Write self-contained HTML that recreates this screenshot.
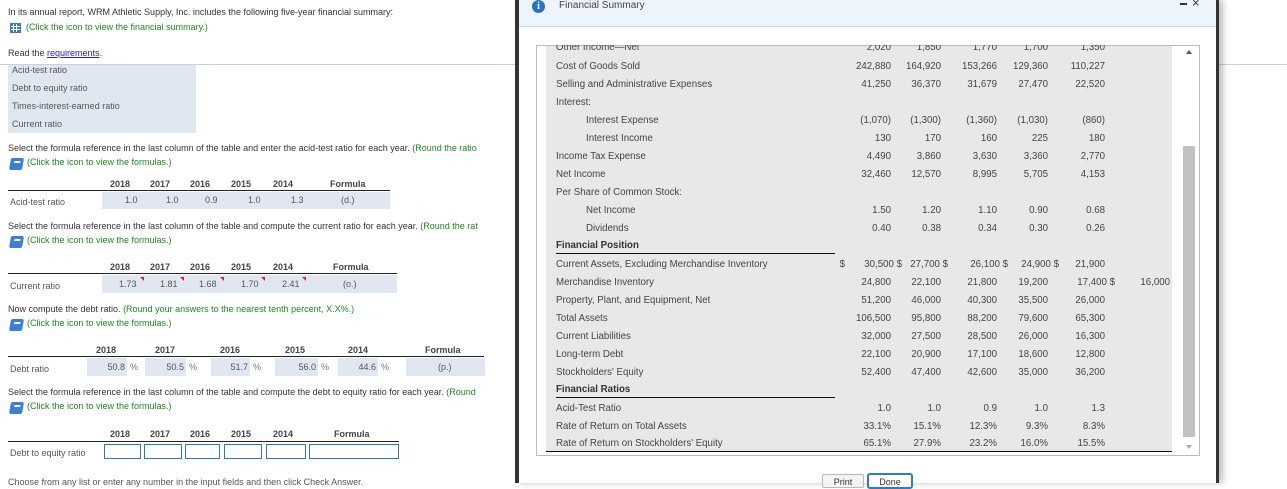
<!DOCTYPE html>
<html><head><meta charset="utf-8"><style>
*{margin:0;padding:0;box-sizing:border-box}
body{width:1287px;height:483px;overflow:hidden;background:#fff;font-family:"Liberation Sans",Arial,sans-serif;font-size:9px;color:#333;position:relative}
.a{position:absolute;white-space:nowrap}
.g{color:#1c8a1c}
.r{text-align:right}
.gray{background:#e1e7f1}
.hd{font-weight:bold;color:#444}
.m{font-size:9.7px;color:#444}
.in{position:absolute;border:1.5px solid #2a7fa3;background:#fff;height:15px;top:444px}
.book{position:absolute;width:13px;height:12px;background:#3b7fd6;border-radius:2px;transform:skewX(-10deg)}
.book:after{content:"";position:absolute;left:4px;top:3px;width:6px;height:1.5px;background:#fff}
.tri{position:absolute;width:0;height:0;border-left:4px solid transparent;border-top:4px solid #d22;top:277px}
</style></head><body>
<div class="a" style="left:0;top:64px;width:1287px;height:1px;background:#c8d0dc"></div>

<div class="a" style="left:8px;top:7px">In its annual report, WRM Athletic Supply, Inc. includes the following five-year financial summary:</div>
<div class="a" style="left:10px;top:23px;width:11px;height:10px;background:#3a78c8;border:1px solid #3a78c8;background-image:linear-gradient(90deg,transparent 2px,#fff 2px,#fff 3px,transparent 3px,transparent 5px,#fff 5px,#fff 6px,transparent 6px),linear-gradient(0deg,transparent 2px,#fff 2px,#fff 3px,transparent 3px,transparent 5px,#fff 5px,#fff 6px,transparent 6px)"></div>
<div class="a g" style="left:26px;top:22px">(Click the icon to view the financial summary.)</div>
<div class="a" style="left:8px;top:48px">Read the <span style="color:#22c;text-decoration:underline">requirements</span>.</div>

<div class="a gray" style="left:8px;top:65px;width:188px;height:68px"></div>
<div class="a" style="left:12px;top:65px;color:#555">Acid-test ratio</div>
<div class="a" style="left:12px;top:83px;color:#555">Debt to equity ratio</div>
<div class="a" style="left:12px;top:101px;color:#555">Times-interest-earned ratio</div>
<div class="a" style="left:12px;top:119px;color:#555">Current ratio</div>

<div class="a" style="left:8px;top:143px">Select the formula reference in the last column of the table and enter the acid-test ratio for each year. <span class="g">(Round the ratio</span></div>
<div class="book" style="left:10px;top:158px"></div>
<div class="a g" style="left:27px;top:157px">(Click the icon to view the formulas.)</div>
<div class="a hd" style="left:110px;top:179px">2018</div><div class="a hd" style="left:150px;top:179px">2017</div><div class="a hd" style="left:190px;top:179px">2016</div><div class="a hd" style="left:231px;top:179px">2015</div><div class="a hd" style="left:273px;top:179px">2014</div><div class="a hd" style="left:330px;top:179px">Formula</div>
<div class="a" style="left:8px;top:190px;width:382px;height:1px;background:#222"></div>
<div class="a gray" style="left:102px;top:192px;width:288px;height:17px"></div>
<div class="a" style="left:10px;top:197px;color:#555">Acid-test ratio</div>
<div class="a" style="left:125px;top:195px;color:#555">1.0</div><div class="a" style="left:166px;top:195px;color:#555">1.0</div><div class="a" style="left:205px;top:195px;color:#555">0.9</div><div class="a" style="left:248px;top:195px;color:#555">1.0</div><div class="a" style="left:291px;top:195px;color:#555">1.3</div><div class="a" style="left:341px;top:195px;color:#555">(d.)</div>

<div class="a" style="left:8px;top:221px">Select the formula reference in the last column of the table and compute the current ratio for each year. <span class="g">(Round the rat</span></div>
<div class="book" style="left:10px;top:236px"></div>
<div class="a g" style="left:27px;top:235px">(Click the icon to view the formulas.)</div>
<div class="a hd" style="left:110px;top:262px">2018</div><div class="a hd" style="left:150px;top:262px">2017</div><div class="a hd" style="left:190px;top:262px">2016</div><div class="a hd" style="left:231px;top:262px">2015</div><div class="a hd" style="left:273px;top:262px">2014</div><div class="a hd" style="left:333px;top:262px">Formula</div>
<div class="a" style="left:8px;top:273px;width:389px;height:1px;background:#222"></div>
<div class="a gray" style="left:102px;top:275px;width:295px;height:18px"></div>
<div class="a" style="left:10px;top:281px;color:#555">Current ratio</div>
<div class="a" style="left:119px;top:279px;color:#555">1.73</div><div class="a" style="left:160px;top:279px;color:#555">1.81</div><div class="a" style="left:199px;top:279px;color:#555">1.68</div><div class="a" style="left:241px;top:279px;color:#555">1.70</div><div class="a" style="left:282px;top:279px;color:#555">2.41</div><div class="a" style="left:343px;top:279px;color:#555">(o.)</div>
<div class="tri" style="left:140px"></div><div class="tri" style="left:180px"></div><div class="tri" style="left:220px"></div><div class="tri" style="left:261px"></div><div class="tri" style="left:302px"></div>

<div class="a" style="left:8px;top:304px">Now compute the debt ratio. <span class="g">(Round your answers to the nearest tenth percent, X.X%.)</span></div>
<div class="book" style="left:10px;top:319px"></div>
<div class="a g" style="left:27px;top:318px">(Click the icon to view the formulas.)</div>
<div class="a hd" style="left:96px;top:345px">2018</div><div class="a hd" style="left:155px;top:345px">2017</div><div class="a hd" style="left:220px;top:345px">2016</div><div class="a hd" style="left:285px;top:345px">2015</div><div class="a hd" style="left:348px;top:345px">2014</div><div class="a hd" style="left:425px;top:345px">Formula</div>
<div class="a" style="left:8px;top:356px;width:476px;height:1px;background:#222"></div>
<div class="a gray" style="left:87px;top:358px;width:40px;height:18px"></div>
<div class="a gray" style="left:145px;top:358px;width:41px;height:18px"></div>
<div class="a gray" style="left:211px;top:358px;width:39px;height:18px"></div>
<div class="a gray" style="left:275px;top:358px;width:43px;height:18px"></div>
<div class="a gray" style="left:338px;top:358px;width:40px;height:18px"></div>
<div class="a gray" style="left:406px;top:358px;width:79px;height:18px"></div>
<div class="a" style="left:10px;top:364px;color:#555">Debt ratio</div>
<div class="a r" style="right:1162px;top:362px;color:#555">50.8</div><div class="a" style="left:130px;top:362px;color:#777">%</div>
<div class="a r" style="right:1103px;top:362px;color:#555">50.5</div><div class="a" style="left:189px;top:362px;color:#777">%</div>
<div class="a r" style="right:1039px;top:362px;color:#555">51.7</div><div class="a" style="left:253px;top:362px;color:#777">%</div>
<div class="a r" style="right:971px;top:362px;color:#555">56.0</div><div class="a" style="left:321px;top:362px;color:#777">%</div>
<div class="a r" style="right:911px;top:362px;color:#555">44.6</div><div class="a" style="left:381px;top:362px;color:#777">%</div>
<div class="a" style="left:438px;top:362px;color:#555">(p.)</div>

<div class="a" style="left:8px;top:387px">Select the formula reference in the last column of the table and compute the debt to equity ratio for each year. <span class="g">(Round</span></div>
<div class="book" style="left:10px;top:402px"></div>
<div class="a g" style="left:27px;top:401px">(Click the icon to view the formulas.)</div>
<div class="a hd" style="left:110px;top:429px">2018</div><div class="a hd" style="left:150px;top:429px">2017</div><div class="a hd" style="left:190px;top:429px">2016</div><div class="a hd" style="left:231px;top:429px">2015</div><div class="a hd" style="left:273px;top:429px">2014</div><div class="a hd" style="left:334px;top:429px">Formula</div>
<div class="a" style="left:8px;top:441px;width:391px;height:1px;background:#222"></div>
<div class="a" style="left:10px;top:448px;color:#555">Debt to equity ratio</div>
<div class="in" style="left:104px;width:37px"></div>
<div class="in" style="left:144px;width:38px"></div>
<div class="in" style="left:185px;width:35px"></div>
<div class="in" style="left:224px;width:38px"></div>
<div class="in" style="left:266px;width:40px"></div>
<div class="in" style="left:309px;width:90px"></div>
<div class="a" style="left:8px;top:477px;color:#555">Choose from any list or enter any number in the input fields and then click Check Answer.</div>

<div class="a" style="left:515px;top:0;width:704px;height:483px;background:#fff;border-left:4px solid #333;border-right:3px solid #333;box-shadow:4px 0 6px rgba(0,0,0,.25)"></div>
<div class="a" style="left:519px;top:0;width:697px;height:27px;background:#eef4fc;border-bottom:1px solid #cfdbe9"></div>
<div class="a" style="left:532px;top:0;width:13px;height:13px;border-radius:50%;background:#2a72c8;color:#fff;font-weight:bold;font-size:10px;text-align:center;line-height:13px;font-family:'Liberation Serif',serif">i</div>
<div class="a" style="left:559px;top:0;font-size:10px;color:#444">Financial Summary</div>
<div class="a" style="left:1180px;top:3px;width:7px;height:2px;background:#333"></div>
<div class="a" style="left:1192px;top:-5px;font-size:13px;color:#333">×</div>

<div class="a" style="left:536px;top:45px;width:664px;height:411px;border:1px solid #bbb;background:#fff"></div>
<div class="a" style="left:546px;top:46px;width:626px;height:406px;background:#e8e8e8"></div>
<div class="a" style="left:546px;top:451px;width:626px;height:1px;background:#111"></div>
<div class="a" style="left:556px;top:253px;width:279px;height:1px;background:#111"></div>
<div class="a" style="left:556px;top:397px;width:279px;height:1px;background:#111"></div>
<div class="a" style="left:1183px;top:146px;width:12px;height:291px;background:#c1c1c1"></div>
<div class="a" style="left:1186px;top:50px;border-left:3px solid transparent;border-right:3px solid transparent;border-bottom:4px solid #555"></div>
<div class="a" style="left:1186px;top:445px;border-left:3px solid transparent;border-right:3px solid transparent;border-top:4px solid #aaa"></div>

<div class="m">
<div class="a" style="left:556px;top:42px;height:9px;overflow:hidden">Other Income—Net</div>
<div class="a" style="left:556px;top:61px">Cost of Goods Sold</div>
<div class="a" style="left:556px;top:79px">Selling and Administrative Expenses</div>
<div class="a" style="left:556px;top:97px">Interest:</div>
<div class="a" style="left:586px;top:115px">Interest Expense</div>
<div class="a" style="left:586px;top:133px">Interest Income</div>
<div class="a" style="left:556px;top:151px">Income Tax Expense</div>
<div class="a" style="left:556px;top:169px">Net Income</div>
<div class="a" style="left:556px;top:187px">Per Share of Common Stock:</div>
<div class="a" style="left:586px;top:205px">Net Income</div>
<div class="a" style="left:586px;top:223px">Dividends</div>
<div class="a" style="left:556px;top:240px;font-weight:bold;color:#333">Financial Position</div>
<div class="a" style="left:556px;top:259px">Current Assets, Excluding Merchandise Inventory</div>
<div class="a" style="left:556px;top:277px">Merchandise Inventory</div>
<div class="a" style="left:556px;top:295px">Property, Plant, and Equipment, Net</div>
<div class="a" style="left:556px;top:313px">Total Assets</div>
<div class="a" style="left:556px;top:331px">Current Liabilities</div>
<div class="a" style="left:556px;top:349px">Long-term Debt</div>
<div class="a" style="left:556px;top:367px">Stockholders' Equity</div>
<div class="a" style="left:556px;top:384px;font-weight:bold;color:#333">Financial Ratios</div>
<div class="a" style="left:556px;top:403px">Acid-Test Ratio</div>
<div class="a" style="left:556px;top:421px">Rate of Return on Total Assets</div>
<div class="a" style="left:556px;top:438px">Rate of Return on Stockholders' Equity</div>
</div>

<div class="m" id="nums"></div>
<div class="a" style="left:822px;top:474px;width:42px;height:14px;border:1px solid #bbb;border-radius:2px;background:#f4f4f4;text-align:center;font-size:9px;padding-top:2px">Print</div>
<div class="a" style="left:867px;top:473px;width:46px;height:16px;border:2px solid #2b7bd0;border-radius:3px;background:#fff;text-align:center;font-size:9px;padding-top:2px">Done</div>
<div class="a" style="left:519px;top:28px;width:697px;height:17px;background:#fff"></div>
<script>
var R=[891,941,997,1048,1105];
var rows=[[42,["2,020","1,850","1,770","1,700","1,350"]],[61,["242,880","164,920","153,266","129,360","110,227"]],[79,["41,250","36,370","31,679","27,470","22,520"]],[115,["(1,070)","(1,300)","(1,360)","(1,030)","(860)"]],[133,["130","170","160","225","180"]],[151,["4,490","3,860","3,630","3,360","2,770"]],[169,["32,460","12,570","8,995","5,705","4,153"]],[205,["1.50","1.20","1.10","0.90","0.68"]],[223,["0.40","0.38","0.34","0.30","0.26"]],[295,["51,200","46,000","40,300","35,500","26,000"]],[313,["106,500","95,800","88,200","79,600","65,300"]],[331,["32,000","27,500","28,500","26,000","16,300"]],[349,["22,100","20,900","17,100","18,600","12,800"]],[367,["52,400","47,400","42,600","35,000","36,200"]],[403,["1.0","1.0","0.9","1.0","1.3"]],[421,["33.1%","15.1%","12.3%","9.3%","8.3%"]],[438,["65.1%","27.9%","23.2%","16.0%","15.5%"]]];
var h="";
rows.forEach(function(r){r[1].forEach(function(v,i){h+='<div class="a r" style="right:'+(1287-R[i])+'px;top:'+r[0]+'px">'+v+'</div>';});});
var sp=[[259,[["$",845],["30,500 $",902],["27,700 $",948],["26,100 $",1008],["24,900 $",1059],["21,900",1105]]],[277,[["24,800",891],["22,100",941],["21,800",997],["19,200",1048],["17,400 $",1115],["16,000",1170]]]];
sp.forEach(function(r){r[1].forEach(function(p){h+='<div class="a r" style="right:'+(1287-p[1])+'px;top:'+r[0]+'px">'+p[0]+'</div>';});});
document.getElementById("nums").innerHTML=h;
</script>
</body></html>
